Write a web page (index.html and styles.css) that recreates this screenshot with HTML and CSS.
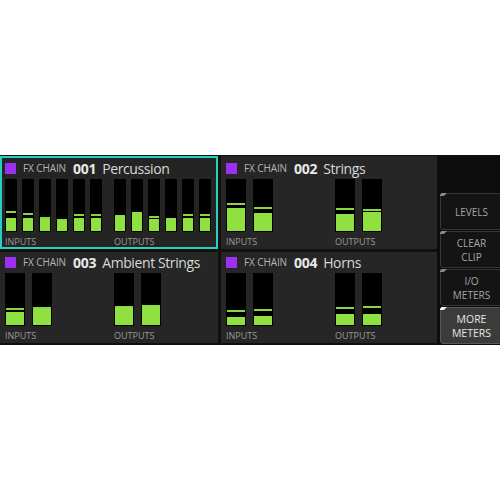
FILE: index.html
```html
<!DOCTYPE html>
<html>
<head>
<meta charset="utf-8">
<link rel="stylesheet" href="styles.css">
</head>
<body>
<div class="screen">
  <div class="grid">
    <div class="panel selected">
      <div class="head"><span class="sq"></span><span class="fx">FX CHAIN</span><span class="num">001</span><span class="name">Percussion</span></div>
      <div class="meters narrow">
        <div class="group">
          <div class="meter"><div class="peak" style="top:32px"></div><div class="fill" style="height:13px"></div></div>
          <div class="meter"><div class="peak" style="top:34px"></div><div class="fill" style="height:13px"></div></div>
          <div class="meter"><div class="peak" style="top:38px"></div><div class="fill" style="height:12px"></div></div>
          <div class="meter"><div class="peak" style="top:40px"></div><div class="fill" style="height:10px"></div></div>
          <div class="meter"><div class="peak" style="top:35px"></div><div class="fill" style="height:13px"></div></div>
          <div class="meter"><div class="peak" style="top:35px"></div><div class="fill" style="height:13px"></div></div>
        </div>
        <div class="group">
          <div class="meter"><div class="fill" style="height:16px"></div></div>
          <div class="meter"><div class="fill" style="height:19px"></div></div>
          <div class="meter"><div class="peak" style="top:37px"></div><div class="fill" style="height:12px"></div></div>
          <div class="meter"><div class="fill" style="height:13px"></div></div>
          <div class="meter"><div class="peak" style="top:35px"></div><div class="fill" style="height:13px"></div></div>
          <div class="meter"><div class="peak" style="top:35px"></div><div class="fill" style="height:13px"></div></div>
        </div>
      </div>
      <div class="labels"><span>INPUTS</span><span>OUTPUTS</span></div>
    </div>

    <div class="panel">
      <div class="head"><span class="sq"></span><span class="fx">FX CHAIN</span><span class="num">002</span><span class="name">Strings</span></div>
      <div class="meters">
        <div class="group">
          <div class="meter"><div class="peak" style="top:24px"></div><div class="fill" style="height:23px"></div></div>
          <div class="meter"><div class="peak" style="top:28px"></div><div class="fill" style="height:18px"></div></div>
        </div>
        <div class="group">
          <div class="meter"><div class="peak" style="top:29px"></div><div class="fill" style="height:17px"></div></div>
          <div class="meter"><div class="peak" style="top:30px"></div><div class="fill" style="height:19px"></div></div>
        </div>
      </div>
      <div class="labels"><span>INPUTS</span><span>OUTPUTS</span></div>
    </div>

    <div class="panel">
      <div class="head"><span class="sq"></span><span class="fx">FX CHAIN</span><span class="num">003</span><span class="name">Ambient Strings</span></div>
      <div class="meters">
        <div class="group">
          <div class="meter"><div class="peak" style="top:35px"></div><div class="fill" style="height:13px"></div></div>
          <div class="meter"><div class="peak" style="top:34px"></div><div class="fill" style="height:16px"></div></div>
        </div>
        <div class="group">
          <div class="meter"><div class="peak" style="top:33px"></div><div class="fill" style="height:18px"></div></div>
          <div class="meter"><div class="fill" style="height:20px"></div></div>
        </div>
      </div>
      <div class="labels"><span>INPUTS</span><span>OUTPUTS</span></div>
    </div>

    <div class="panel">
      <div class="head"><span class="sq"></span><span class="fx">FX CHAIN</span><span class="num">004</span><span class="name">Horns</span></div>
      <div class="meters">
        <div class="group">
          <div class="meter"><div class="peak" style="top:37px"></div><div class="fill" style="height:8px"></div></div>
          <div class="meter"><div class="peak" style="top:36px"></div><div class="fill" style="height:9px"></div></div>
        </div>
        <div class="group">
          <div class="meter"><div class="peak" style="top:34px"></div><div class="fill" style="height:11px"></div></div>
          <div class="meter"><div class="peak" style="top:33px"></div><div class="fill" style="height:11px"></div></div>
        </div>
      </div>
      <div class="labels"><span>INPUTS</span><span>OUTPUTS</span></div>
    </div>
  </div>

  <div class="side">
    <div class="btn"><span class="tab"></span>LEVELS</div>
    <div class="btn"><span class="tab"></span>CLEAR<br>CLIP</div>
    <div class="btn"><span class="tab"></span>I/O<br>METERS</div>
    <div class="btn active"><span class="tab"></span>MORE<br>METERS</div>
  </div>
</div>
</body>
</html>
```

FILE: styles.css
```css
html, body {
  margin: 0;
  padding: 0;
  background: #ffffff;
  overflow: hidden;
}

.screen {
  margin-top: 155px;
  height: 190px;
  width: 500px;
  background: #101010;
  display: flex;
  overflow: hidden;
  font-family: "Open Sans", "Noto Sans", sans-serif;
}

.grid {
  width: 437px;
  flex: none;
  display: grid;
  grid-template-columns: 218px 216px;
  grid-template-rows: 93px 91px;
  column-gap: 3px;
  row-gap: 3px;
  padding-top: 1px;
}

.panel {
  background: #262626;
  display: flex;
  flex-direction: column;
  justify-content: flex-end;
  padding: 0 5px;
  position: relative;
}

.panel.selected {
  box-shadow: inset 0 0 0 2px #27cfc0;
  background: #242424;
}

.head {
  height: 11px;
  margin-bottom: 5px;
  display: flex;
  align-items: center;
  white-space: nowrap;
}

.sq {
  width: 11px;
  height: 11px;
  background: #9b30f0;
  flex: none;
  margin-right: 7px;
}

.fx {
  font-size: 10px;
  line-height: 11px;
  color: #b4b4b4;
  letter-spacing: -0.1px;
  margin-right: 7px;
}

.num {
  font-size: 14px;
  line-height: 11px;
  font-weight: 700;
  color: #e8e8e8;
  letter-spacing: -0.3px;
  margin-right: 6px;
}

.name {
  font-size: 14px;
  line-height: 11px;
  color: #d8d8d8;
  letter-spacing: -0.4px;
}

.meters {
  height: 53px;
  display: flex;
}

.group {
  width: 109px;
  flex: none;
  display: flex;
  gap: 7px;
}

.meter {
  width: 20px;
  height: 53px;
  background: #000000;
  position: relative;
  flex: none;
}

.narrow .group {
  gap: 5px;
}

.narrow .meter {
  width: 12px;
}

.fill {
  position: absolute;
  left: 1px;
  right: 1px;
  bottom: 1px;
  background: #8fe040;
}

.peak {
  position: absolute;
  left: 1px;
  right: 1px;
  height: 2px;
  background: #88d640;
}

.labels {
  height: 17px;
  padding-top: 1px;
  box-sizing: border-box;
  display: flex;
  align-items: center;
  font-size: 9px;
  color: #9a9a9a;
}

.labels span {
  width: 109px;
  flex: none;
}

.side {
  flex: 1;
  background: #0d0d0d;
  padding-top: 38px;
  padding-left: 3px;
  display: flex;
  flex-direction: column;
  gap: 1px;
  overflow: hidden;
}

.btn {
  width: 63px;
  height: 37px;
  box-sizing: border-box;
  border: 1px solid #353535;
  border-radius: 3px;
  background: #141414;
  color: #a6a6a6;
  font-size: 10px;
  line-height: 14px;
  display: flex;
  align-items: center;
  justify-content: center;
  text-align: center;
  position: relative;
  flex: none;
}

.btn.active {
  background: #3b3b3b;
  border-color: #575757;
  color: #e6e6e6;
  font-size: 10.5px;
}

.tab {
  position: absolute;
  top: -1px;
  left: -1px;
  width: 7px;
  height: 3px;
  background: #8a8a8a;
  clip-path: polygon(20% 0, 100% 0, 55% 100%, 0 100%, 0 60%);
}

.btn.active .tab {
  background: #f0f0f0;
}
```
